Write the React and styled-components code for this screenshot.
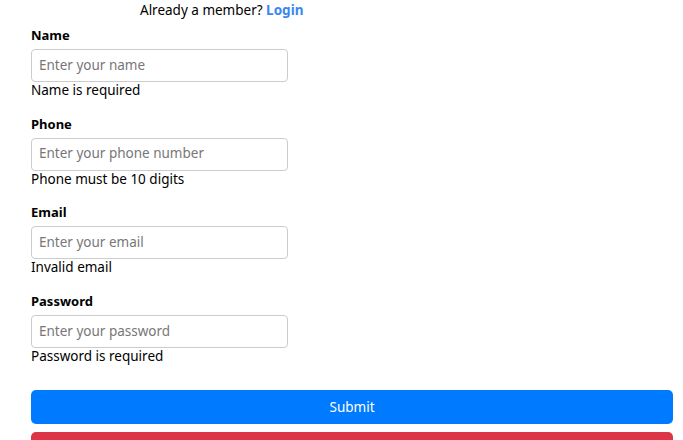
import React from 'react';
import styled, { createGlobalStyle } from 'styled-components';

const GlobalStyle = createGlobalStyle`
  body {
    margin: 0;
    background: #fff;
    font-family: 'Noto Sans', 'Open Sans', sans-serif;
    color: #000;
  }
`;

const Page = styled.div`
  padding: 0 10px 0 31px;
`;

const MemberLine = styled.p`
  margin: 0 0 5px 109px;
  font-size: 13.5px;
  line-height: 20px;
`;

const LoginLink = styled.a`
  color: #3b87f0;
  font-weight: 700;
  text-decoration: none;
`;

const Form = styled.form`
  display: flex;
  flex-direction: column;
`;

const Field = styled.div`
  display: flex;
  flex-direction: column;
  margin-bottom: 13.7px;
`;

const Label = styled.label`
  font-size: 13px;
  font-weight: 700;
  line-height: 20px;
  margin-bottom: 4px;
`;

const Input = styled.input`
  box-sizing: border-box;
  width: 257px;
  height: 33px;
  padding: 0 7px 2px;
  border: 1px solid #ccc;
  border-radius: 4px;
  font-family: inherit;
  font-size: 13.5px;
  outline: none;

  &::placeholder {
    color: #777;
  }
`;

const Error = styled.span`
  font-size: 13.5px;
  line-height: 16px;
  margin-bottom: 2px;
`;

const Button = styled.button`
  box-sizing: border-box;
  width: 100%;
  height: 34px;
  border: none;
  border-radius: 5px;
  background: ${({ $variant }) => ($variant === 'danger' ? '#dc3545' : '#007bff')};
  color: #fff;
  font-family: inherit;
  font-size: 13.5px;
  cursor: pointer;
`;

const Actions = styled.div`
  display: flex;
  flex-direction: column;
  gap: 8px;
  margin-top: 10px;
`;

const fields = [
  { name: 'name', label: 'Name', placeholder: 'Enter your name', error: 'Name is required' },
  { name: 'phone', label: 'Phone', placeholder: 'Enter your phone number', error: 'Phone must be 10 digits' },
  { name: 'email', label: 'Email', placeholder: 'Enter your email', error: 'Invalid email' },
  { name: 'password', label: 'Password', placeholder: 'Enter your password', error: 'Password is required', type: 'password' },
];

const App = () => {
  return (
    <Page>
      <GlobalStyle />
      <MemberLine>
        Already a member? <LoginLink href='#!'>Login</LoginLink>
      </MemberLine>
      <Form onSubmit={(e) => e.preventDefault()}>
        {fields.map((f) => (
          <Field key={f.name}>
            <Label htmlFor={f.name}>{f.label}</Label>
            <Input id={f.name} type={f.type || 'text'} placeholder={f.placeholder} />
            <Error>{f.error}</Error>
          </Field>
        ))}
        <Actions>
          <Button type='submit'>Submit</Button>
          <Button type='button' $variant='danger'>Reset</Button>
        </Actions>
      </Form>
    </Page>
  );
};

export default App;
